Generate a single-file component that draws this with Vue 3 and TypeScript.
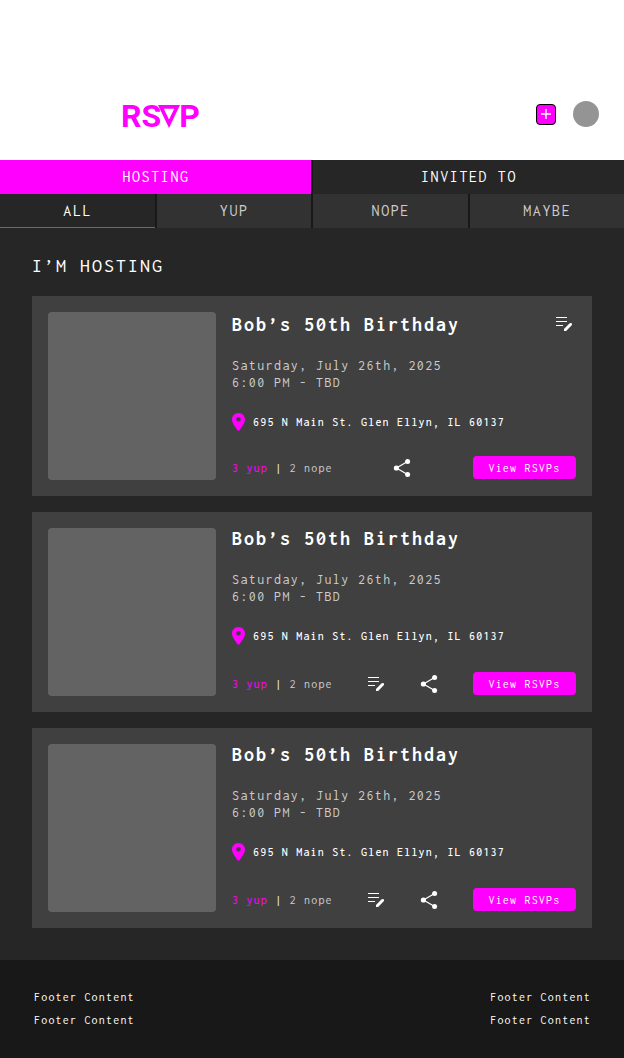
<script setup lang="ts">
import { ref } from 'vue'

interface EventItem {
  id: number
  title: string
  date: string
  time: string
  address: string
  yup: number
  nope: number
  editOnTop: boolean
}

const base = {
  title: 'Bob’s 50th Birthday',
  date: 'Saturday, July 26th, 2025',
  time: '6:00 PM - TBD',
  address: '695 N Main St. Glen Ellyn, IL 60137',
  yup: 3,
  nope: 2,
}

const events: EventItem[] = [
  { id: 1, ...base, editOnTop: true },
  { id: 2, ...base, editOnTop: false },
  { id: 3, ...base, editOnTop: false },
]

const views = ['HOSTING', 'INVITED TO']
const filters = ['ALL', 'YUP', 'NOPE', 'MAYBE']
const view = ref('HOSTING')
const filter = ref('ALL')
const footerColumns = [
  ['Footer Content', 'Footer Content'],
  ['Footer Content', 'Footer Content'],
]
</script>

<template>
  <div class="page">
    <header class="header">
      <div class="logo">
        <span>RS</span>
        <svg class="logo-v" viewBox="0 0 22 23" aria-hidden="true">
          <path fill-rule="evenodd" d="M0 0H22L11 23ZM5.8 3.8L11 14.6L16.2 3.8Z" />
        </svg>
        <span>P</span>
      </div>
      <div class="account">
        <button class="add" type="button" aria-label="Add event">
          <svg viewBox="0 0 12 12" aria-hidden="true"><path d="M6 1V11M1 6H11" /></svg>
        </button>
        <button class="avatar" type="button" aria-label="Account"></button>
      </div>
    </header>

    <nav class="tabs">
      <div class="views">
        <button
          v-for="name in views"
          :key="name"
          type="button"
          class="view"
          :class="{ active: view === name }"
          @click="view = name"
        >{{ name }}</button>
      </div>
      <div class="filters">
        <button
          v-for="name in filters"
          :key="name"
          type="button"
          class="filter"
          :class="{ active: filter === name }"
          @click="filter = name"
        >{{ name }}</button>
      </div>
    </nav>

    <main class="main">
      <h1 class="heading">I’M HOSTING</h1>
      <article v-for="event in events" :key="event.id" class="card">
        <div class="photo"></div>
        <div class="details">
          <div class="title-row" :class="{ tall: event.editOnTop }">
            <h2 class="title">{{ event.title }}</h2>
            <button v-if="event.editOnTop" class="icon" type="button" aria-label="Edit event">
              <svg viewBox="0 0 24 24" aria-hidden="true">
                <path d="M4 5H15V6H4ZM4 9H15V10H4ZM4 13H11V14H4ZM12 19V16.9L17.4 11.5C18.2 10.8 19 10.8 19.6 11.3C20.2 11.9 20.2 12.8 19.5 13.6L14.1 19Z" />
              </svg>
            </button>
          </div>
          <p class="when">{{ event.date }}<br />{{ event.time }}</p>
          <p class="where">
            <svg class="pin" viewBox="0 0 13 18" aria-hidden="true">
              <path fill-rule="evenodd" d="M6.5 0C2.9 0 0 2.9 0 6.4C0 11.2 6.5 18 6.5 18S13 11.2 13 6.4C13 2.9 10.1 0 6.5 0ZM6.5 8.6A2.3 2.3 0 1 1 6.5 4A2.3 2.3 0 1 1 6.5 8.6Z" />
            </svg>
            <span>{{ event.address }}</span>
          </p>
          <div class="actions">
            <p class="counts"><span class="yup">{{ event.yup }} yup</span> <span class="bar">|</span> {{ event.nope }} nope</p>
            <button v-if="!event.editOnTop" class="icon" type="button" aria-label="Edit event">
              <svg viewBox="0 0 24 24" aria-hidden="true">
                <path d="M4 5H15V6H4ZM4 9H15V10H4ZM4 13H11V14H4ZM12 19V16.9L17.4 11.5C18.2 10.8 19 10.8 19.6 11.3C20.2 11.9 20.2 12.8 19.5 13.6L14.1 19Z" />
              </svg>
            </button>
            <button class="icon" type="button" aria-label="Share event">
              <svg viewBox="0 0 24 24" aria-hidden="true">
                <path class="stroke" d="M16.6 5.4L5.4 12L16.6 18.6" />
                <circle cx="5.4" cy="12" r="2.6" />
                <circle cx="16.6" cy="5.4" r="2.5" />
                <circle cx="16.6" cy="18.6" r="2.5" />
              </svg>
            </button>
            <button class="rsvps" type="button">View RSVPs</button>
          </div>
        </div>
      </article>
    </main>

    <footer class="footer">
      <div v-for="(column, i) in footerColumns" :key="i">
        <p v-for="(line, j) in column" :key="j">{{ line }}</p>
      </div>
    </footer>
  </div>
</template>

<style>
body {
  margin: 0;
  background: #181818;
}
</style>

<style scoped>
.page {
  background: #262626;
  color: #fff;
  font-family: Inconsolata, "DejaVu Sans Mono", monospace;
  font-size: 12px;
}
h1, h2, p, button {
  letter-spacing: 0.1em;
}
h1, h2, p {
  margin: 0;
}
button {
  font-family: inherit;
  color: inherit;
  padding: 0;
  border: 0;
  background: none;
  cursor: pointer;
}
svg {
  display: block;
}
.header {
  display: flex;
  justify-content: space-between;
  align-items: flex-end;
  padding: 100px 25px 32px 121px;
  background: #fff;
}
.logo {
  display: flex;
  align-items: flex-end;
  color: #f0f;
  font-family: Roboto, sans-serif;
  font-weight: 700;
  font-size: 32px;
  line-height: 24px;
}
.logo-v {
  width: 22px;
  height: 23px;
  margin: 0 -1px 0 -3px;
  fill: #f0f;
}
.account {
  display: flex;
  align-items: center;
  gap: 17px;
  height: 28px;
}
.add {
  display: grid;
  place-items: center;
  box-sizing: border-box;
  width: 20px;
  height: 21px;
  border: 1px solid #000;
  border-radius: 4px;
  background: #f0f;
}
.add svg {
  width: 12px;
  height: 12px;
  stroke: #fff;
  stroke-width: 1.4;
}
.avatar {
  width: 26px;
  height: 26px;
  border-radius: 50%;
  background: #949494;
}
.tabs {
  background: #181818;
}
.views,
.filters {
  display: grid;
  gap: 2px;
}
.views {
  grid-template-columns: repeat(2, 1fr);
}
.filters {
  grid-template-columns: repeat(4, 1fr);
}
.view,
.filter {
  height: 34px;
  padding: 0 0 2px 1px;
  font-size: 16px;
}
.view {
  background: #262626;
}
.view.active {
  background: #f0f;
}
.filter {
  background: #323232;
  color: #ccc;
}
.filter.active {
  background: #262626;
  color: #fff;
  box-shadow: inset 0 -1px #f0f;
}
.main {
  display: flex;
  flex-direction: column;
  gap: 16px;
  padding: 24px 32px 32px;
}
.heading {
  font-size: 20px;
  font-weight: 400;
  line-height: 28px;
}
.card {
  display: flex;
  gap: 16px;
  padding: 16px;
  background: #404040;
}
.photo {
  flex: none;
  width: 168px;
  height: 168px;
  border-radius: 4px;
  background: #636363;
}
.details {
  flex: 1;
  display: flex;
  flex-direction: column;
  justify-content: space-between;
}
.title-row {
  display: flex;
  justify-content: space-between;
}
.title {
  font-size: 20px;
  font-weight: 700;
  line-height: 22px;
}
.tall .title {
  line-height: 26px;
}
.icon svg {
  width: 24px;
  height: 24px;
  fill: #fff;
}
.icon {
  height: 24px;
}
.icon .stroke {
  fill: none;
  stroke: #fff;
  stroke-width: 1.2;
}
.when {
  color: #ccc;
  font-size: 14px;
  line-height: 17px;
}
.where {
  display: flex;
  align-items: center;
  gap: 8px;
  padding-bottom: 4px;
  font-weight: 500;
  line-height: 22px;
}
.pin {
  width: 13px;
  height: 18px;
  fill: #f0f;
}
.actions {
  display: flex;
  align-items: center;
  justify-content: space-between;
  height: 24px;
}
.counts {
  color: #ccc;
}
.yup {
  color: #f0f;
}
.bar {
  color: #fff;
}
.rsvps {
  min-width: 103px;
  height: 23px;
  border-radius: 4px;
  background: #f0f;
  font-size: 12px;
}
.footer {
  display: flex;
  justify-content: space-between;
  padding: 26px 33px 26px 34px;
  background: #181818;
  line-height: 23px;
}
</style>
